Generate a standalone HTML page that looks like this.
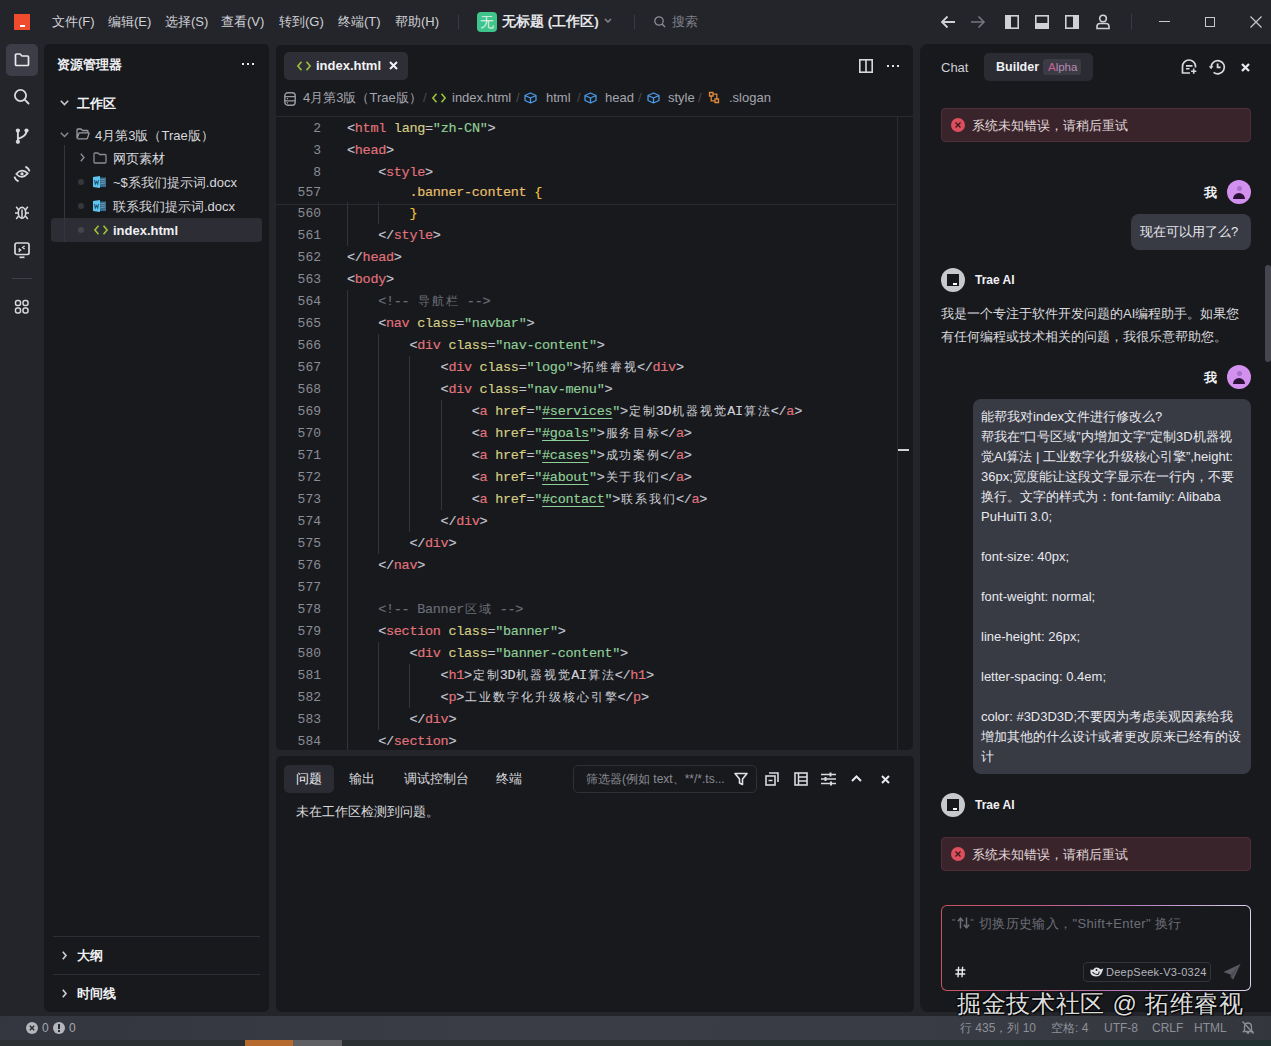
<!DOCTYPE html>
<html><head><meta charset="utf-8">
<style>
*{margin:0;padding:0;box-sizing:border-box}
html,body{width:1271px;height:1046px;overflow:hidden;background:#24252b;font-family:"Liberation Sans",sans-serif;color:#d8d9de}
.a{position:absolute}
.t{position:absolute;white-space:nowrap;line-height:1}
svg{position:absolute;overflow:visible}
/* titlebar */
.menu{font-size:13px;color:#d0d1d6;top:15px}
.panel{position:absolute;background:#18191d;border-radius:5px}
/* code */
.code{position:absolute;left:275.4px;top:116px;width:621px;height:634px;overflow:hidden}
.ln{position:absolute;margin-top:-0.6px;left:0.6px;width:45px;text-align:right;font-family:"Liberation Mono",monospace;font-size:13px;color:#8a8d96;line-height:22px}
.cl{position:absolute;margin-top:-0.6px;left:71.6px;font-family:"Liberation Mono",monospace;font-size:13.5px;letter-spacing:-0.3px;-webkit-text-stroke:0.15px currentColor;line-height:22px;color:#cfd0d6;white-space:pre}
.p{color:#c4c7d2}.tg{color:#e2737c}.at{color:#d5cf86}.s{color:#8fcf98}.cm{color:#6a6d76}.sel{color:#e8c06e}.br{color:#f0c33c}
.u{text-decoration:underline;text-underline-offset:3px;text-decoration-color:#8fcf98}
.ig{position:absolute;width:1px;margin-top:-2.5px;background:#33353c}
.bc{font-size:13px;color:#a4a6ae}.bs{font-size:13px;color:#4a4b52}
.cj{font-size:12px;letter-spacing:1.95px;-webkit-text-stroke:0;position:relative;left:1px}

.err{left:941px;width:310px;height:34px;background:#3a242b;border:1px solid #522d38;border-radius:4px}
.errdot{left:951px;width:14px;height:14px;border-radius:50%;background:#de4f5d}
.errt{left:972px;font-size:13px;color:#e0d8da}
.av{left:1227px;width:24px;height:24px;border-radius:50%;background:#d291ef}
.av::before{content:"";position:absolute;left:9.5px;top:5.5px;width:5px;height:5px;border-radius:50%;background:#a86fcb}
.av::after{content:"";position:absolute;left:6px;top:13px;width:12px;height:6px;border-radius:6px 6px 0 0;background:#2a1236}
.tav{left:941px;width:24px;height:24px;border-radius:50%;background:#c8c9cc}
.tav::before{content:"";position:absolute;left:6px;top:6px;width:12px;height:12px;background:#17181c}
.tav::after{content:"";position:absolute;left:12px;top:15px;width:4px;height:1.5px;background:#fff}
.sb{top:1022px;font-size:12px;color:#8e9098}
.wm{font-size:24px;letter-spacing:0.7px;color:#dcdcdc;text-shadow:0 0 2px #000,1px 1px 1px #000,-1px -1px 1px #000}
</style></head><body>
<!-- title bar -->
<div class="a" style="left:14px;top:14px;width:16px;height:16px;background:#f04a2f"></div>
<div class="a" style="left:20px;top:25px;width:5px;height:2px;background:#fff"></div>
<div class="t menu" style="left:52px">文件(F)</div>
<div class="t menu" style="left:108px">编辑(E)</div>
<div class="t menu" style="left:165px">选择(S)</div>
<div class="t menu" style="left:221px">查看(V)</div>
<div class="t menu" style="left:279px">转到(G)</div>
<div class="t menu" style="left:338px">终端(T)</div>
<div class="t menu" style="left:395px">帮助(H)</div>
<div class="a" style="left:458px;top:15px;width:1px;height:14px;background:#3a3b42"></div>
<div class="a" style="left:477px;top:12px;width:20px;height:20px;background:#3fc48c;border-radius:4px"></div>
<div class="t" style="left:480px;top:15px;font-size:14px;color:#e2f3ea">无</div>
<div class="t" style="left:502px;top:15px;font-size:13.5px;font-weight:bold;color:#e6e7ea">无标题 (工作区)</div>
<svg style="left:604px;top:18px" width="8" height="6"><path d="M1 1 L4 4 L7 1" stroke="#8a8c94" stroke-width="1.4" fill="none"/></svg>
<div class="a" style="left:634px;top:15px;width:1px;height:14px;background:#3a3b42"></div>
<svg style="left:654px;top:16px" width="12" height="12"><circle cx="5" cy="5" r="4.2" stroke="#8a8c94" stroke-width="1.3" fill="none"/><path d="M8 8 L11 11" stroke="#8a8c94" stroke-width="1.4"/></svg>
<div class="t" style="left:672px;top:15px;font-size:13px;color:#7e8088">搜索</div>

<!-- titlebar right -->
<svg style="left:940px;top:15px" width="16" height="14"><path d="M15 7 H2 M7.5 1.5 L2 7 L7.5 12.5" stroke="#d0d1d6" stroke-width="1.8" fill="none"/></svg>
<svg style="left:970px;top:15px" width="16" height="14"><path d="M1 7 H14 M8.5 1.5 L14 7 L8.5 12.5" stroke="#75777f" stroke-width="1.6" fill="none"/></svg>
<svg style="left:1005px;top:15px" width="14" height="14"><rect x="0.8" y="0.8" width="12.4" height="12.4" stroke="#d0d1d6" stroke-width="1.6" fill="none"/><rect x="1" y="1" width="5" height="12" fill="#d0d1d6"/></svg>
<svg style="left:1035px;top:15px" width="14" height="14"><rect x="0.8" y="0.8" width="12.4" height="12.4" stroke="#d0d1d6" stroke-width="1.6" fill="none"/><rect x="1" y="8" width="12" height="5" fill="#d0d1d6"/></svg>
<svg style="left:1065px;top:15px" width="14" height="14"><rect x="0.8" y="0.8" width="12.4" height="12.4" stroke="#d0d1d6" stroke-width="1.6" fill="none"/><rect x="8" y="1" width="5" height="12" fill="#d0d1d6"/></svg>
<svg style="left:1096px;top:14px" width="14" height="16"><circle cx="7" cy="4.5" r="3.3" stroke="#d0d1d6" stroke-width="1.6" fill="none"/><path d="M1 14.5 V12.5 Q1 9.5 4 9.5 H10 Q13 9.5 13 12.5 V14.5 Z" stroke="#d0d1d6" stroke-width="1.6" fill="none"/></svg>
<div class="a" style="left:1131px;top:14px;width:1px;height:16px;background:#3a3b42"></div>
<div class="a" style="left:1159px;top:21px;width:11px;height:1.2px;background:#c8c9ce"></div>
<div class="a" style="left:1205px;top:17px;width:10px;height:10px;border:1.2px solid #c8c9ce"></div>
<svg style="left:1250px;top:16px" width="12" height="12"><path d="M0.5 0.5 L11.5 11.5 M11.5 0.5 L0.5 11.5" stroke="#c8c9ce" stroke-width="1.2"/></svg>

<!-- activity bar -->
<div class="a" style="left:6px;top:44px;width:32px;height:32px;background:#3c3d46;border-radius:5px"></div>
<svg style="left:14px;top:52px" width="16" height="16"><path d="M1.5 3 Q1.5 2 2.5 2 H6 L8 4 H13.5 Q14.5 4 14.5 5 V12.5 Q14.5 13.5 13.5 13.5 H2.5 Q1.5 13.5 1.5 12.5 Z" stroke="#e8e9ee" stroke-width="1.7" fill="none" stroke-linejoin="round"/></svg>
<svg style="left:13px;top:88px" width="18" height="18"><circle cx="7.5" cy="7.5" r="5.6" stroke="#d8d9de" stroke-width="1.8" fill="none"/><path d="M11.7 11.7 L15.5 15.5" stroke="#d8d9de" stroke-width="1.9" stroke-linecap="round"/></svg>
<svg style="left:14px;top:128px" width="16" height="16"><circle cx="3.9" cy="2.6" r="2.1" fill="#d8d9de"/><circle cx="3.9" cy="13.8" r="2.1" fill="#d8d9de"/><circle cx="12.5" cy="2.6" r="2.1" fill="#d8d9de"/><path d="M3.9 2.6 V13.8 M12.5 2.6 Q12.5 8.6 3.9 10.8" stroke="#d8d9de" stroke-width="1.9" fill="none"/></svg>
<svg style="left:13px;top:165px" width="18" height="18"><path d="M3.2 9 Q9 2.6 14.8 8.4 Q9 15 3.2 9 Z" stroke="#d8d9de" stroke-width="1.7" fill="none" stroke-linejoin="round"/><circle cx="9" cy="8.8" r="1.6" fill="#d8d9de"/><path d="M12.4 1.6 Q15.8 3 16.5 6.4" stroke="#d8d9de" stroke-width="1.8" fill="none"/><path d="M5.6 16.4 Q2.2 15 1.5 11.6" stroke="#d8d9de" stroke-width="1.8" fill="none"/></svg>
<svg style="left:14px;top:204px" width="16" height="16"><ellipse cx="8" cy="8.8" rx="3.7" ry="5.4" stroke="#d8d9de" stroke-width="1.6" fill="none"/><path d="M8 5.5 V14 M4.6 6 L2.2 2.8 M11.4 6 L13.8 2.8 M4.2 9 H1 M11.8 9 H15 M4.6 12 L2.2 15 M11.4 12 L13.8 15" stroke="#d8d9de" stroke-width="1.5"/></svg>
<svg style="left:14px;top:242px" width="16" height="16"><rect x="1" y="1" width="14" height="11.5" rx="1.8" stroke="#d8d9de" stroke-width="1.7" fill="none"/><path d="M5.5 15.3 H10.5" stroke="#d8d9de" stroke-width="1.7"/><path d="M4.6 6.6 L6.6 8.1 L4.6 9.6 M10.6 4 L8.6 5.5 L10.6 7" stroke="#d8d9de" stroke-width="1.4" fill="none"/></svg>
<div class="a" style="left:12px;top:278px;width:20px;height:1px;background:#3e3f47"></div>
<svg style="left:14px;top:299px" width="16" height="16"><rect x="1.5" y="1.5" width="5" height="5" rx="2" stroke="#d8d9de" stroke-width="1.5" fill="none"/><rect x="9" y="1.5" width="5" height="5" rx="2" stroke="#d8d9de" stroke-width="1.5" fill="none"/><rect x="1.5" y="9" width="5" height="5" rx="2" stroke="#d8d9de" stroke-width="1.5" fill="none"/><rect x="9" y="9" width="5" height="5" rx="2" stroke="#d8d9de" stroke-width="1.5" fill="none"/></svg>

<!-- panels -->
<div class="panel" style="left:44px;top:44px;width:225px;height:968px"></div>
<div class="panel" style="left:276px;top:45px;width:637px;height:705px"></div>
<div class="panel" style="left:276px;top:756px;width:638px;height:256px"></div>
<div class="panel" style="left:920px;top:44px;width:351px;height:968px;border-radius:8px 0 0 8px"></div>


<!-- explorer -->
<div class="t" style="left:57px;top:58px;font-size:13px;font-weight:bold;color:#f0f1f4">资源管理器</div>
<div class="a" style="left:242px;top:63px;width:2px;height:2px;background:#e8e9ee"></div>
<div class="a" style="left:247px;top:63px;width:2px;height:2px;background:#e8e9ee"></div>
<div class="a" style="left:252px;top:63px;width:2px;height:2px;background:#e8e9ee"></div>
<svg style="left:60px;top:100px" width="9" height="6"><path d="M0.8 0.8 L4.5 4.6 L8.2 0.8" stroke="#c8c9ce" stroke-width="1.6" fill="none"/></svg>
<div class="t" style="left:77px;top:97px;font-size:13px;font-weight:bold;color:#f0f1f4">工作区</div>
<div class="a" style="left:51px;top:218px;width:211px;height:24px;background:#2c2d35;border-radius:4px"></div>
<div class="a" style="left:64px;top:145px;width:1px;height:97px;background:#34353d"></div>
<svg style="left:60px;top:132px" width="9" height="6"><path d="M0.8 0.8 L4.5 4.6 L8.2 0.8" stroke="#8a8c94" stroke-width="1.4" fill="none"/></svg>
<svg style="left:76px;top:128px" width="14" height="12"><path d="M1 10.5 V2 Q1 1 2 1 H5 L6.5 2.5 H11 Q12 2.5 12 3.5 V4.5 M1 10.5 L2.8 5.5 Q3 4.8 3.8 4.8 H12.5 Q13.3 4.8 13 5.6 L11.5 10 Q11.3 10.8 10.5 10.8 H1.5" stroke="#9a9ca4" stroke-width="1.3" fill="none" stroke-linejoin="round"/></svg>
<div class="t" style="left:95px;top:129px;font-size:13px;color:#d8d9de">4月第3版（Trae版）</div>
<svg style="left:80px;top:153px" width="5" height="9"><path d="M0.8 0.8 L4 4.5 L0.8 8.2" stroke="#8a8c94" stroke-width="1.4" fill="none"/></svg>
<svg style="left:93px;top:152px" width="14" height="12"><path d="M1 2 Q1 1 2 1 H5 L6.5 2.5 H12 Q13 2.5 13 3.5 V10 Q13 11 12 11 H2 Q1 11 1 10 Z" stroke="#8a8c94" stroke-width="1.3" fill="none" stroke-linejoin="round"/></svg>
<div class="t" style="left:113px;top:152px;font-size:13px;color:#d8d9de">网页素材</div>
<div class="a" style="left:78px;top:179px;width:6px;height:6px;border-radius:50%;background:#36373d"></div>
<svg style="left:93px;top:176px" width="13" height="12"><rect x="6" y="1.5" width="7" height="9.5" fill="#3b6f8f"/><path d="M7.5 3.5 H12 M7.5 5.5 H12 M7.5 7.5 H12" stroke="#6a9ab5" stroke-width="0.8"/><path d="M0 1 L7 0 V12 L0 11 Z" fill="#5cc4f0"/><path d="M1.5 4 L2.3 8 L3.5 5.5 L4.7 8 L5.5 4" stroke="#1f5878" stroke-width="1.1" fill="none"/></svg>
<div class="t" style="left:113px;top:176px;font-size:13px;color:#d8d9de">~$系我们提示词.docx</div>
<div class="a" style="left:78px;top:203px;width:6px;height:6px;border-radius:50%;background:#36373d"></div>
<svg style="left:93px;top:200px" width="13" height="12"><rect x="6" y="1.5" width="7" height="9.5" fill="#3b6f8f"/><path d="M7.5 3.5 H12 M7.5 5.5 H12 M7.5 7.5 H12" stroke="#6a9ab5" stroke-width="0.8"/><path d="M0 1 L7 0 V12 L0 11 Z" fill="#5cc4f0"/><path d="M1.5 4 L2.3 8 L3.5 5.5 L4.7 8 L5.5 4" stroke="#1f5878" stroke-width="1.1" fill="none"/></svg>
<div class="t" style="left:113px;top:200px;font-size:13px;color:#d8d9de">联系我们提示词.docx</div>
<div class="a" style="left:78px;top:227px;width:6px;height:6px;border-radius:50%;background:#44454d"></div>
<svg style="left:94px;top:225px" width="14" height="10"><path d="M4.5 0.8 L0.9 5 L4.5 9.2 M9.5 0.8 L13.1 5 L9.5 9.2" stroke="#9cc23a" stroke-width="1.6" fill="none"/></svg>
<div class="t" style="left:113px;top:224px;font-size:13px;font-weight:bold;color:#f0f1f4">index.html</div>
<div class="a" style="left:53px;top:936px;width:207px;height:1px;background:#2e2f36"></div>
<svg style="left:62px;top:951px" width="5" height="9"><path d="M0.8 0.8 L4 4.5 L0.8 8.2" stroke="#d0d1d6" stroke-width="1.6" fill="none"/></svg>
<div class="t" style="left:77px;top:949px;font-size:13px;font-weight:bold;color:#f0f1f4">大纲</div>
<div class="a" style="left:53px;top:974px;width:207px;height:1px;background:#2e2f36"></div>
<svg style="left:62px;top:989px" width="5" height="9"><path d="M0.8 0.8 L4 4.5 L0.8 8.2" stroke="#d0d1d6" stroke-width="1.6" fill="none"/></svg>
<div class="t" style="left:77px;top:987px;font-size:13px;font-weight:bold;color:#f0f1f4">时间线</div>

<!-- editor -->
<div class="a" style="left:284px;top:52px;width:124px;height:28px;background:#2d2e36;border-radius:5px"></div>
<svg style="left:297px;top:61px" width="14" height="10"><path d="M4.5 0.8 L0.9 5 L4.5 9.2 M9.5 0.8 L13.1 5 L9.5 9.2" stroke="#9cc23a" stroke-width="1.6" fill="none"/></svg>
<div class="t" style="left:316px;top:59px;font-size:13px;font-weight:bold;color:#f2f3f5">index.html</div>
<svg style="left:389px;top:61px" width="9" height="9"><path d="M1 1 L8 8 M8 1 L1 8" stroke="#f2f3f5" stroke-width="2"/></svg>
<svg style="left:859px;top:59px" width="14" height="14"><rect x="0.8" y="0.8" width="12.4" height="12.4" stroke="#d8d9de" stroke-width="1.6" fill="none"/><path d="M7 1 V13" stroke="#d8d9de" stroke-width="1.6"/></svg>
<div class="a" style="left:887px;top:65px;width:2px;height:2px;background:#e0e1e6"></div>
<div class="a" style="left:892px;top:65px;width:2px;height:2px;background:#e0e1e6"></div>
<div class="a" style="left:897px;top:65px;width:2px;height:2px;background:#e0e1e6"></div>
<svg style="left:284px;top:92px" width="12" height="14"><rect x="0.8" y="0.8" width="10.4" height="12.4" rx="3" stroke="#9a9ca4" stroke-width="1.4" fill="none"/><path d="M0.8 4.6 H11.2 M0.8 8.8 H11.2" stroke="#9a9ca4" stroke-width="1.3"/><path d="M2.8 6.7 H4 M2.8 10.9 H4" stroke="#9a9ca4" stroke-width="1.2"/></svg>
<div class="t bc" style="left:303px;top:91.4px">4月第3版（Trae版）</div>
<div class="t bs" style="left:423px;top:91.4px">/</div>
<svg style="left:432px;top:93px" width="14" height="10"><path d="M4.5 0.8 L0.9 5 L4.5 9.2 M9.5 0.8 L13.1 5 L9.5 9.2" stroke="#9cc23a" stroke-width="1.6" fill="none"/></svg>
<div class="t bc" style="left:452px;top:91.4px">index.html</div>
<div class="t bs" style="left:516px;top:91.4px">/</div>
<svg style="left:524px;top:92px" width="13" height="12" class="cube"><path d="M6.5 1 L12 3.5 V8.5 L6.5 11 L1 8.5 V3.5 Z M1 3.5 L6.5 6 L12 3.5 M6.5 6 V11" stroke="#4a9ae8" stroke-width="1.3" fill="none" stroke-linejoin="round"/></svg>
<div class="t bc" style="left:546px;top:91.4px">html</div>
<div class="t bs" style="left:577px;top:91.4px">/</div>
<svg style="left:584px;top:92px" width="13" height="12"><path d="M6.5 1 L12 3.5 V8.5 L6.5 11 L1 8.5 V3.5 Z M1 3.5 L6.5 6 L12 3.5 M6.5 6 V11" stroke="#4a9ae8" stroke-width="1.3" fill="none" stroke-linejoin="round"/></svg>
<div class="t bc" style="left:605px;top:91.4px">head</div>
<div class="t bs" style="left:638px;top:91.4px">/</div>
<svg style="left:647px;top:92px" width="13" height="12"><path d="M6.5 1 L12 3.5 V8.5 L6.5 11 L1 8.5 V3.5 Z M1 3.5 L6.5 6 L12 3.5 M6.5 6 V11" stroke="#4a9ae8" stroke-width="1.3" fill="none" stroke-linejoin="round"/></svg>
<div class="t bc" style="left:668px;top:91.4px">style</div>
<div class="t bs" style="left:698px;top:91.4px">/</div>
<svg style="left:708px;top:91px" width="12" height="13"><path d="M1.5 1.5 H5 V5 H1.5 Z M7 8 H10.5 V11.5 H7 Z M3.2 5 V9.8 H7 M5 3.2 H8.8 V8" stroke="#e08a3c" stroke-width="1.3" fill="none"/></svg>
<div class="t bc" style="left:729px;top:91.4px">.slogan</div>
<div class="a" style="left:276px;top:116px;width:637px;height:1px;background:#2a2b31"></div>
<div class="code">
<div class="ln" style="top:0px;margin-top:1.6px">2</div>
<div class="cl" style="margin-top:1.6px;top:0px;left:71.6px"><span class="p">&lt;</span><span class="tg">html</span> <span class="at">lang</span><span class="p">=</span><span class="s">"</span><span class="s">zh-CN</span><span class="s">"</span><span class="p">&gt;</span></div>
<div class="ln" style="top:22px;margin-top:1.6px">3</div>
<div class="cl" style="margin-top:1.6px;top:22px;left:71.6px"><span class="p">&lt;</span><span class="tg">head</span><span class="p">&gt;</span></div>
<div class="ln" style="top:44px;margin-top:1.6px">8</div>
<div class="cl" style="margin-top:1.6px;top:44px;left:102.8px"><span class="p">&lt;</span><span class="tg">style</span><span class="p">&gt;</span></div>
<div class="ln" style="top:66px;margin-top:-0.5px">557</div>
<div class="cl" style="margin-top:-0.5px;top:66px;left:134.0px"><span class="sel">.banner-content </span><span class="br">{</span></div>
<div class="ln" style="top:88px">560</div>
<div class="ig" style="left:71.6px;top:88px;height:22px"></div>
<div class="ig" style="left:102.8px;top:88px;height:22px"></div>
<div class="cl" style="top:88px;left:134.0px"><span class="br">}</span></div>
<div class="ln" style="top:110px">561</div>
<div class="ig" style="left:71.6px;top:110px;height:22px"></div>
<div class="cl" style="top:110px;left:102.8px"><span class="p">&lt;/</span><span class="tg">style</span><span class="p">&gt;</span></div>
<div class="ln" style="top:132px">562</div>
<div class="cl" style="top:132px;left:71.6px"><span class="p">&lt;/</span><span class="tg">head</span><span class="p">&gt;</span></div>
<div class="ln" style="top:154px">563</div>
<div class="cl" style="top:154px;left:71.6px"><span class="p">&lt;</span><span class="tg">body</span><span class="p">&gt;</span></div>
<div class="ln" style="top:176px">564</div>
<div class="ig" style="left:71.6px;top:176px;height:22px"></div>
<div class="cl" style="top:176px;left:102.8px"><span class="cm">&lt;!-- </span><span class="cm cj">导航栏</span><span class="cm"> --&gt;</span></div>
<div class="ln" style="top:198px">565</div>
<div class="ig" style="left:71.6px;top:198px;height:22px"></div>
<div class="cl" style="top:198px;left:102.8px"><span class="p">&lt;</span><span class="tg">nav</span> <span class="at">class</span><span class="p">=</span><span class="s">"</span><span class="s">navbar</span><span class="s">"</span><span class="p">&gt;</span></div>
<div class="ln" style="top:220px">566</div>
<div class="ig" style="left:71.6px;top:220px;height:22px"></div>
<div class="ig" style="left:102.8px;top:220px;height:22px"></div>
<div class="cl" style="top:220px;left:134.0px"><span class="p">&lt;</span><span class="tg">div</span> <span class="at">class</span><span class="p">=</span><span class="s">"</span><span class="s">nav-content</span><span class="s">"</span><span class="p">&gt;</span></div>
<div class="ln" style="top:242px">567</div>
<div class="ig" style="left:71.6px;top:242px;height:22px"></div>
<div class="ig" style="left:102.8px;top:242px;height:22px"></div>
<div class="ig" style="left:134.0px;top:242px;height:22px"></div>
<div class="cl" style="top:242px;left:165.2px"><span class="p">&lt;</span><span class="tg">div</span> <span class="at">class</span><span class="p">=</span><span class="s">"</span><span class="s">logo</span><span class="s">"</span><span class="p">&gt;</span><span class="cj">拓维睿视</span><span class="p">&lt;/</span><span class="tg">div</span><span class="p">&gt;</span></div>
<div class="ln" style="top:264px">568</div>
<div class="ig" style="left:71.6px;top:264px;height:22px"></div>
<div class="ig" style="left:102.8px;top:264px;height:22px"></div>
<div class="ig" style="left:134.0px;top:264px;height:22px"></div>
<div class="cl" style="top:264px;left:165.2px"><span class="p">&lt;</span><span class="tg">div</span> <span class="at">class</span><span class="p">=</span><span class="s">"</span><span class="s">nav-menu</span><span class="s">"</span><span class="p">&gt;</span></div>
<div class="ln" style="top:286px">569</div>
<div class="ig" style="left:71.6px;top:286px;height:22px"></div>
<div class="ig" style="left:102.8px;top:286px;height:22px"></div>
<div class="ig" style="left:134.0px;top:286px;height:22px"></div>
<div class="ig" style="left:165.2px;top:286px;height:22px"></div>
<div class="cl" style="top:286px;left:196.4px"><span class="p">&lt;</span><span class="tg">a</span> <span class="at">href</span><span class="p">=</span><span class="s">"</span><span class="s u">#services</span><span class="s">"</span><span class="p">&gt;</span><span class="cj">定制</span>3D<span class="cj">机器视觉</span>AI<span class="cj">算法</span><span class="p">&lt;/</span><span class="tg">a</span><span class="p">&gt;</span></div>
<div class="ln" style="top:308px">570</div>
<div class="ig" style="left:71.6px;top:308px;height:22px"></div>
<div class="ig" style="left:102.8px;top:308px;height:22px"></div>
<div class="ig" style="left:134.0px;top:308px;height:22px"></div>
<div class="ig" style="left:165.2px;top:308px;height:22px"></div>
<div class="cl" style="top:308px;left:196.4px"><span class="p">&lt;</span><span class="tg">a</span> <span class="at">href</span><span class="p">=</span><span class="s">"</span><span class="s u">#goals</span><span class="s">"</span><span class="p">&gt;</span><span class="cj">服务目标</span><span class="p">&lt;/</span><span class="tg">a</span><span class="p">&gt;</span></div>
<div class="ln" style="top:330px">571</div>
<div class="ig" style="left:71.6px;top:330px;height:22px"></div>
<div class="ig" style="left:102.8px;top:330px;height:22px"></div>
<div class="ig" style="left:134.0px;top:330px;height:22px"></div>
<div class="ig" style="left:165.2px;top:330px;height:22px"></div>
<div class="cl" style="top:330px;left:196.4px"><span class="p">&lt;</span><span class="tg">a</span> <span class="at">href</span><span class="p">=</span><span class="s">"</span><span class="s u">#cases</span><span class="s">"</span><span class="p">&gt;</span><span class="cj">成功案例</span><span class="p">&lt;/</span><span class="tg">a</span><span class="p">&gt;</span></div>
<div class="ln" style="top:352px">572</div>
<div class="ig" style="left:71.6px;top:352px;height:22px"></div>
<div class="ig" style="left:102.8px;top:352px;height:22px"></div>
<div class="ig" style="left:134.0px;top:352px;height:22px"></div>
<div class="ig" style="left:165.2px;top:352px;height:22px"></div>
<div class="cl" style="top:352px;left:196.4px"><span class="p">&lt;</span><span class="tg">a</span> <span class="at">href</span><span class="p">=</span><span class="s">"</span><span class="s u">#about</span><span class="s">"</span><span class="p">&gt;</span><span class="cj">关于我们</span><span class="p">&lt;/</span><span class="tg">a</span><span class="p">&gt;</span></div>
<div class="ln" style="top:374px">573</div>
<div class="ig" style="left:71.6px;top:374px;height:22px"></div>
<div class="ig" style="left:102.8px;top:374px;height:22px"></div>
<div class="ig" style="left:134.0px;top:374px;height:22px"></div>
<div class="ig" style="left:165.2px;top:374px;height:22px"></div>
<div class="cl" style="top:374px;left:196.4px"><span class="p">&lt;</span><span class="tg">a</span> <span class="at">href</span><span class="p">=</span><span class="s">"</span><span class="s u">#contact</span><span class="s">"</span><span class="p">&gt;</span><span class="cj">联系我们</span><span class="p">&lt;/</span><span class="tg">a</span><span class="p">&gt;</span></div>
<div class="ln" style="top:396px">574</div>
<div class="ig" style="left:71.6px;top:396px;height:22px"></div>
<div class="ig" style="left:102.8px;top:396px;height:22px"></div>
<div class="ig" style="left:134.0px;top:396px;height:22px"></div>
<div class="cl" style="top:396px;left:165.2px"><span class="p">&lt;/</span><span class="tg">div</span><span class="p">&gt;</span></div>
<div class="ln" style="top:418px">575</div>
<div class="ig" style="left:71.6px;top:418px;height:22px"></div>
<div class="ig" style="left:102.8px;top:418px;height:22px"></div>
<div class="cl" style="top:418px;left:134.0px"><span class="p">&lt;/</span><span class="tg">div</span><span class="p">&gt;</span></div>
<div class="ln" style="top:440px">576</div>
<div class="ig" style="left:71.6px;top:440px;height:22px"></div>
<div class="cl" style="top:440px;left:102.8px"><span class="p">&lt;/</span><span class="tg">nav</span><span class="p">&gt;</span></div>
<div class="ln" style="top:462px">577</div>
<div class="ig" style="left:71.6px;top:462px;height:22px"></div>
<div class="cl" style="top:462px;left:71.6px"></div>
<div class="ln" style="top:484px">578</div>
<div class="ig" style="left:71.6px;top:484px;height:22px"></div>
<div class="cl" style="top:484px;left:102.8px"><span class="cm">&lt;!-- Banner</span><span class="cm cj">区域</span><span class="cm"> --&gt;</span></div>
<div class="ln" style="top:506px">579</div>
<div class="ig" style="left:71.6px;top:506px;height:22px"></div>
<div class="cl" style="top:506px;left:102.8px"><span class="p">&lt;</span><span class="tg">section</span> <span class="at">class</span><span class="p">=</span><span class="s">"</span><span class="s">banner</span><span class="s">"</span><span class="p">&gt;</span></div>
<div class="ln" style="top:528px">580</div>
<div class="ig" style="left:71.6px;top:528px;height:22px"></div>
<div class="ig" style="left:102.8px;top:528px;height:22px"></div>
<div class="cl" style="top:528px;left:134.0px"><span class="p">&lt;</span><span class="tg">div</span> <span class="at">class</span><span class="p">=</span><span class="s">"</span><span class="s">banner-content</span><span class="s">"</span><span class="p">&gt;</span></div>
<div class="ln" style="top:550px">581</div>
<div class="ig" style="left:71.6px;top:550px;height:22px"></div>
<div class="ig" style="left:102.8px;top:550px;height:22px"></div>
<div class="ig" style="left:134.0px;top:550px;height:22px"></div>
<div class="cl" style="top:550px;left:165.2px"><span class="p">&lt;</span><span class="tg">h1</span><span class="p">&gt;</span><span class="cj">定制</span>3D<span class="cj">机器视觉</span>AI<span class="cj">算法</span><span class="p">&lt;/</span><span class="tg">h1</span><span class="p">&gt;</span></div>
<div class="ln" style="top:572px">582</div>
<div class="ig" style="left:71.6px;top:572px;height:22px"></div>
<div class="ig" style="left:102.8px;top:572px;height:22px"></div>
<div class="ig" style="left:134.0px;top:572px;height:22px"></div>
<div class="cl" style="top:572px;left:165.2px"><span class="p">&lt;</span><span class="tg">p</span><span class="p">&gt;</span><span class="cj">工业数字化升级核心引擎</span><span class="p">&lt;/</span><span class="tg">p</span><span class="p">&gt;</span></div>
<div class="ln" style="top:594px">583</div>
<div class="ig" style="left:71.6px;top:594px;height:22px"></div>
<div class="ig" style="left:102.8px;top:594px;height:22px"></div>
<div class="cl" style="top:594px;left:134.0px"><span class="p">&lt;/</span><span class="tg">div</span><span class="p">&gt;</span></div>
<div class="ln" style="top:616px">584</div>
<div class="ig" style="left:71.6px;top:616px;height:22px"></div>
<div class="cl" style="top:616px;left:102.8px"><span class="p">&lt;/</span><span class="tg">section</span><span class="p">&gt;</span></div>
<div class="a" style="left:0;top:88px;width:621px;height:1px;background:#2a2b31"></div>
</div>
<div class="a" style="left:897px;top:117px;width:1px;height:633px;background:#2a2b31"></div>
<div class="a" style="left:898px;top:449px;width:11px;height:2px;background:#d0d1d6"></div>

<!-- bottom panel -->
<div class="a" style="left:284px;top:765px;width:50px;height:28px;background:#2a2b33;border-radius:5px"></div>
<div class="t" style="left:296px;top:772px;font-size:13px;color:#f0f1f4">问题</div>
<div class="t" style="left:349px;top:772px;font-size:13px;color:#d8d9de">输出</div>
<div class="t" style="left:404px;top:772px;font-size:13px;color:#d8d9de">调试控制台</div>
<div class="t" style="left:496px;top:772px;font-size:13px;color:#d8d9de">终端</div>
<div class="a" style="left:573px;top:765px;width:184px;height:28px;border:1px solid #2f3037;border-radius:5px"></div>
<div class="t" style="left:586px;top:773px;font-size:12px;color:#8a8c94">筛选器(例如 text、**/*.ts...</div>
<svg style="left:734px;top:772px" width="14" height="14"><path d="M1 1.5 H13 L8.5 7 V12.5 L5.5 11 V7 Z" stroke="#e0e1e6" stroke-width="1.6" fill="none" stroke-linejoin="round"/></svg>
<svg style="left:765px;top:772px" width="14" height="14"><rect x="1" y="4" width="9" height="9" stroke="#d8d9de" stroke-width="1.6" fill="none"/><path d="M4 1 H13 V10 M3.5 8.5 H7.5" stroke="#d8d9de" stroke-width="1.6" fill="none"/></svg>
<svg style="left:794px;top:772px" width="14" height="14"><rect x="1" y="1" width="12" height="12" stroke="#d8d9de" stroke-width="1.6" fill="none"/><path d="M4.5 1 V13 M4.5 5 H13 M4.5 9 H13" stroke="#d8d9de" stroke-width="1.5"/></svg>
<svg style="left:821px;top:772px" width="15" height="14"><path d="M0 2.5 H15 M0 7 H15 M0 11.5 H15" stroke="#d8d9de" stroke-width="1.5"/><path d="M9.5 0.5 V4.5 M4.5 5 V9 M10 9.5 V13.5" stroke="#d8d9de" stroke-width="2"/></svg>
<svg style="left:851px;top:775px" width="11" height="7"><path d="M1 6 L5.5 1.5 L10 6" stroke="#e8e9ee" stroke-width="2" fill="none"/></svg>
<svg style="left:881px;top:775px" width="9" height="9"><path d="M1 1 L8 8 M8 1 L1 8" stroke="#e8e9ee" stroke-width="2"/></svg>
<div class="t" style="left:296px;top:805px;font-size:13px;color:#d8d9de">未在工作区检测到问题。</div>

<!-- chat panel -->
<div class="t" style="left:941px;top:61px;font-size:13px;color:#cfd0d5">Chat</div>
<div class="a" style="left:984px;top:53px;width:109px;height:28px;background:#2a2b33;border-radius:5px"></div>
<div class="t" style="left:996px;top:61px;font-size:12.5px;font-weight:bold;color:#f0f1f4">Builder</div>
<div class="a" style="left:1043px;top:59px;width:38px;height:16px;background:#3a3b45;border-radius:3px"></div>
<div class="t" style="left:1048px;top:62px;font-size:11.5px;color:#b98aae"><span style="color:#d0609a">A</span>lpha</div>
<svg style="left:1181px;top:59px" width="17" height="16"><path d="M9 14 H1.5 V7.5 A6.5 6.5 0 0 1 14.5 7.5 V8.5" stroke="#d8d9de" stroke-width="1.7" fill="none" stroke-linejoin="round"/><path d="M5 6.9 H11.5 M5 9.8 H8.5" stroke="#d8d9de" stroke-width="1.6"/><path d="M12.7 9.6 V14.8 M10.1 12.2 H15.3" stroke="#d8d9de" stroke-width="1.6"/></svg>
<svg style="left:1209px;top:59px" width="17" height="16"><path d="M2.2 8 A6.6 6.6 0 1 1 4.6 13.3" stroke="#d8d9de" stroke-width="1.7" fill="none"/><path d="M-0.2 7.2 L4.4 7.2 L2.1 10.2 Z" fill="#d8d9de"/><path d="M8.6 4.6 V8.4 H11.6" stroke="#d8d9de" stroke-width="1.8" fill="none"/></svg>
<svg style="left:1241px;top:63px" width="9" height="9"><path d="M1 1 L8 8 M8 1 L1 8" stroke="#e8e9ee" stroke-width="2.3"/></svg>

<div class="a err" style="top:108px"></div>
<div class="a errdot" style="top:118px"></div>
<svg style="left:955px;top:122px" width="6" height="6"><path d="M0.5 0.5 L5.5 5.5 M5.5 0.5 L0.5 5.5" stroke="#3a1a1e" stroke-width="1.4"/></svg>
<div class="t errt" style="top:119px">系统未知错误，请稍后重试</div>

<div class="t" style="left:1204px;top:186px;font-size:13px;font-weight:bold;color:#f0f1f4">我</div>
<div class="a av" style="top:180px"></div>
<div class="a" style="left:1131px;top:214px;width:120px;height:36px;background:#383a44;border-radius:8px"></div>
<div class="t" style="left:1140px;top:225px;font-size:13px;color:#e8e9ee">现在可以用了么?</div>

<div class="a tav" style="top:268px"></div>
<div class="t" style="left:975px;top:274px;font-size:12px;font-weight:bold;color:#f0f1f4">Trae AI</div>
<div class="a" style="left:941px;top:302px;font-size:13px;line-height:23px;color:#d8d9de;white-space:pre">我是一个专注于软件开发问题的AI编程助手。如果您
有任何编程或技术相关的问题，我很乐意帮助您。</div>

<div class="t" style="left:1204px;top:371px;font-size:13px;font-weight:bold;color:#f0f1f4">我</div>
<div class="a av" style="top:365px"></div>
<div class="a" style="left:973px;top:399px;width:278px;height:375px;background:#383a44;border-radius:8px"></div>
<div class="a" style="left:981px;top:407px;width:266px;font-size:13px;line-height:20px;color:#e8e9ee;white-space:pre">能帮我对index文件进行修改么?
帮我在”口号区域”内增加文字”定制3D机器视
觉AI算法 | 工业数字化升级核心引擎”,height:
36px;宽度能让这段文字显示在一行内，不要
换行。文字的样式为：font-family: Alibaba
PuHuiTi 3.0;

font-size: 40px;

font-weight: normal;

line-height: 26px;

letter-spacing: 0.4em;

color: #3D3D3D;不要因为考虑美观因素给我
增加其他的什么设计或者更改原来已经有的设
计</div>

<div class="a tav" style="top:793px"></div>
<div class="t" style="left:975px;top:799px;font-size:12px;font-weight:bold;color:#f0f1f4">Trae AI</div>
<div class="a err" style="top:837px"></div>
<div class="a errdot" style="top:847px"></div>
<svg style="left:955px;top:851px" width="6" height="6"><path d="M0.5 0.5 L5.5 5.5 M5.5 0.5 L0.5 5.5" stroke="#3a1a1e" stroke-width="1.4"/></svg>
<div class="t errt" style="top:848px">系统未知错误，请稍后重试</div>

<div class="a" style="left:1265px;top:265px;width:6px;height:97px;background:#45464f;border-radius:3px"></div>

<!-- input -->
<div class="a" style="left:941px;top:905px;width:310px;height:86px;border-radius:6px;background:linear-gradient(95deg,#c9525c 0%,#c2608a 35%,#b57ac0 60%,#ddd6ee 100%)"></div>
<div class="a" style="left:942px;top:906px;width:308px;height:84px;border-radius:5px;background:#18191d"></div>
<div class="t" style="left:951px;top:917px;font-size:13px;letter-spacing:0.35px;color:#6c6e77"><span style="font-size:9px;vertical-align:3px;padding:0 1px">"</span><svg style="position:relative;display:inline-block;vertical-align:-1px" width="13" height="12"><path d="M3.5 11.5 V1.5 M0.8 4.3 L3.5 1.2 L6.2 4.3 M9.5 0.5 V10.5 M6.8 7.7 L9.5 10.8 L12.2 7.7" stroke="#6c6e77" stroke-width="1.5" fill="none"/></svg><span style="font-size:9px;vertical-align:3px;padding:0 1px">"</span> 切换历史输入，"Shift+Enter" 换行</div>
<svg style="left:955px;top:966px" width="11" height="12"><path d="M3.6 0.8 L3 11.2 M7.6 0.8 L7 11.2 M0.6 4 H10.4 M0.4 8 H10.2" stroke="#e8e9ee" stroke-width="1.4"/></svg>
<div class="a" style="left:1083px;top:962px;width:128px;height:20px;border:1px solid #33343c;border-radius:4px"></div>
<svg style="left:1089px;top:966px" width="15" height="12"><path d="M1.5 3.5 Q0.5 10.5 7 10.5 Q11.5 10.5 12.8 6.5 Q14 4.5 14.2 2.2 Q12.8 3.5 11.5 3.2 Q9.5 1.2 7 1.5 Q5 1.8 4.5 3.5 Q3 4 1.5 3.5 Z" fill="#e0e1e6"/><path d="M3.5 6 Q5.5 9 9 8.5 Q10.5 7.5 10 5.5" stroke="#18191d" stroke-width="1.1" fill="none"/><circle cx="7.5" cy="4" r="0.9" fill="#18191d"/></svg>
<div class="t" style="left:1106px;top:967px;font-size:11px;letter-spacing:0.25px;color:#b4b6bc">DeepSeek-V3-0324</div>
<svg style="left:1222px;top:963px" width="20" height="18"><path d="M1.5 9 L18.5 1 L11 17 L8.5 11.5 Z" fill="#5a5c64"/><path d="M8.5 11.5 L18.5 1 L9 16 Z" fill="#4a4c54"/></svg>

<!-- status bar -->
<div class="a" style="left:0;top:1016px;width:1271px;height:24px;background:linear-gradient(90deg,#33363e,#3a3d45 40%,#383b43 80%,#33363d)"></div>
<div class="a" style="left:0;top:1040px;width:1271px;height:6px;background:linear-gradient(90deg,#2c3033,#2a2f31 50%,#213030)"></div>
<div class="a" style="left:245px;top:1040px;width:48px;height:6px;background:#b76a2e"></div>
<div class="a" style="left:293px;top:1040px;width:49px;height:6px;background:#5e6064"></div>
<div class="a" style="left:26px;top:1022px;width:12px;height:12px;border-radius:50%;background:#b4b6bc"></div>
<svg style="left:29px;top:1025px" width="6" height="6"><path d="M0.8 0.8 L5.2 5.2 M5.2 0.8 L0.8 5.2" stroke="#2a2c34" stroke-width="1.4"/></svg>
<div class="t" style="left:42px;top:1022px;font-size:12px;color:#a4a6ae">0</div>
<div class="a" style="left:53px;top:1022px;width:12px;height:12px;border-radius:50%;background:#b4b6bc"></div>
<div class="a" style="left:58px;top:1024px;width:2px;height:5px;background:#2a2c34"></div>
<div class="a" style="left:58px;top:1030px;width:2px;height:2px;background:#2a2c34"></div>
<div class="t" style="left:69px;top:1022px;font-size:12px;color:#a4a6ae">0</div>
<div class="t sb" style="left:960px">行 435，列 10</div>
<div class="t sb" style="left:1051px">空格: 4</div>
<div class="t sb" style="left:1104px">UTF-8</div>
<div class="t sb" style="left:1152px">CRLF</div>
<div class="t sb" style="left:1194px">HTML</div>
<svg style="left:1242px;top:1021px" width="12" height="13"><path d="M2.5 9.5 V6 Q2.5 2 6 2 Q9.5 2 9.5 6 V9.5 L10.5 10.5 H1.5 Z M4.8 12 H7.2" stroke="#8e9098" stroke-width="1.3" fill="none"/><path d="M0.5 0.5 L11.5 12.5" stroke="#8e9098" stroke-width="1.3"/></svg>
<div class="t wm" style="left:957px;top:992px">掘金技术社区 @ 拓维睿视</div>
</body></html>
